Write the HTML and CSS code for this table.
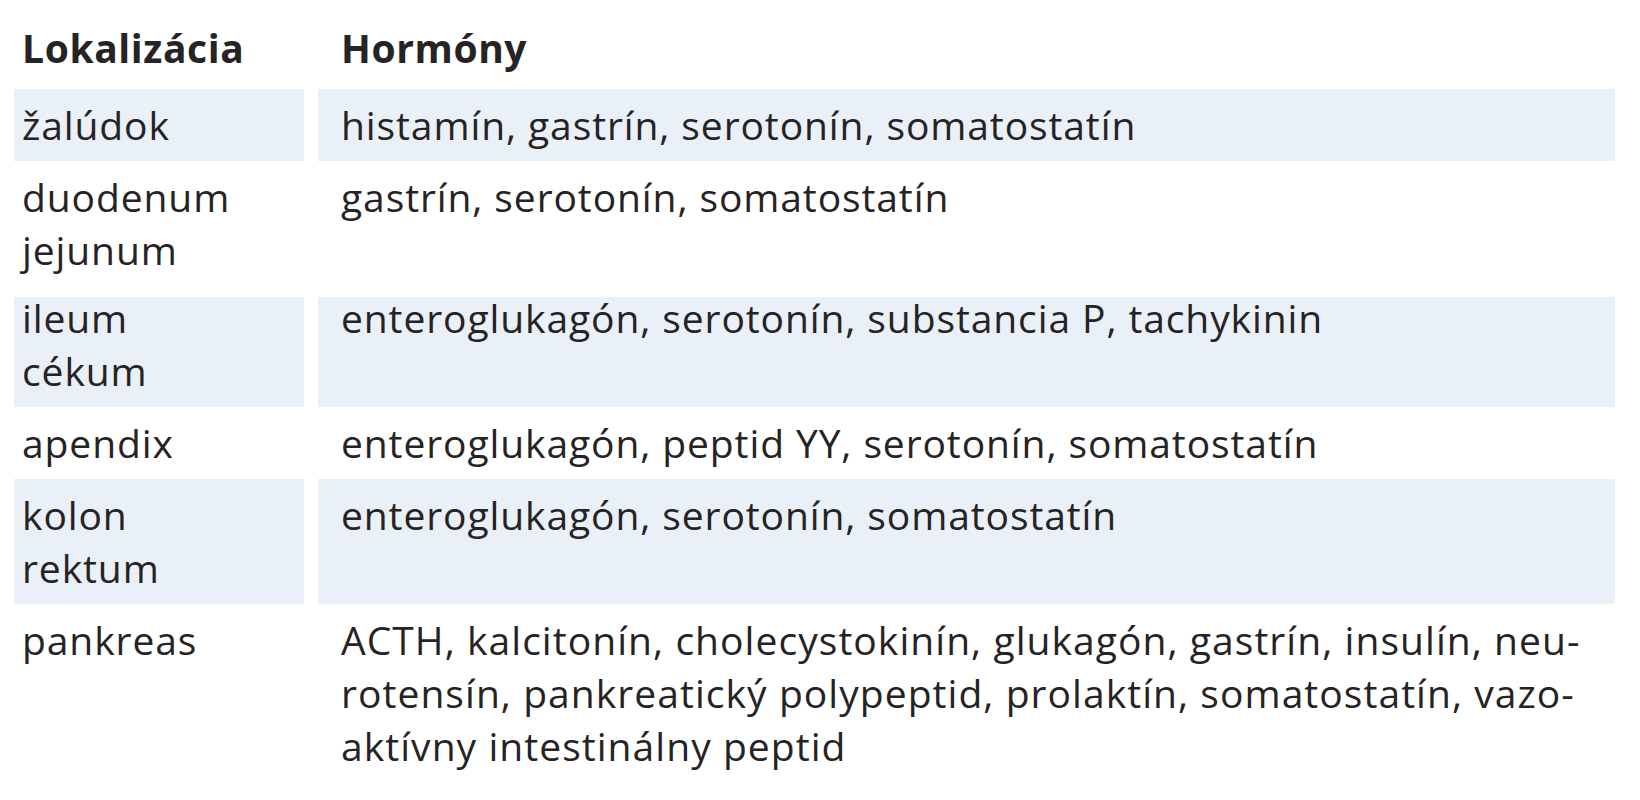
FILE: index.html
```html
<!DOCTYPE html>
<html lang="sk">
<head>
<meta charset="utf-8">
<title>Lokalizácia a hormóny</title>
<link rel="stylesheet" href="styles.css">
</head>
<body>
<table class="hormones">
  <thead>
    <tr>
      <th class="loc">Lokalizácia</th>
      <th class="val">Hormóny</th>
    </tr>
  </thead>
  <tbody>
    <tr class="shaded">
      <td class="loc">žalúdok</td>
      <td class="val">histamín, gastrín, serotonín, somatostatín</td>
    </tr>
    <tr class="before-tight">
      <td class="loc">duodenum<br>jejunum</td>
      <td class="val">gastrín, serotonín, somatostatín</td>
    </tr>
    <tr class="shaded tight">
      <td class="loc"><div class="lift">ileum<br>cékum</div></td>
      <td class="val"><div class="lift">enteroglukagón, serotonín, substancia P, tachykinin</div></td>
    </tr>
    <tr>
      <td class="loc">apendix</td>
      <td class="val">enteroglukagón, peptid YY, serotonín, somatostatín</td>
    </tr>
    <tr class="shaded">
      <td class="loc">kolon<br>rektum</td>
      <td class="val">enteroglukagón, serotonín, somatostatín</td>
    </tr>
    <tr>
      <td class="loc">pankreas</td>
      <td class="val nowrap">ACTH, kalcitonín, cholecystokinín, glukagón, gastrín, insulín, neu-<br>rotensín, pankreatický polypeptid, prolaktín, somatostatín, vazo-<br>aktívny intestinálny peptid</td>
    </tr>
  </tbody>
</table>
</body>
</html>
```

FILE: styles.css
```css
html, body {
  margin: 0;
  padding: 0;
  background: #ffffff;
}

body {
  font-family: "Open Sans", "Noto Sans", "DejaVu Sans", sans-serif;
  color: #262324;
  font-size: 39px;
  letter-spacing: 0.9px;
  line-height: 53px;
}

.hormones {
  border-collapse: separate;
  border-spacing: 14px 0;
  width: 1629px;
}

.hormones th,
.hormones td {
  text-align: left;
  vertical-align: top;
  padding: 9px 8px 10px 8px;
}

.hormones .val {
  padding-left: 23px;
}

.hormones th {
  font-weight: 700;
  letter-spacing: 0.6px;
  padding-top: 21px;
  padding-bottom: 15px;
}

.hormones .loc {
  width: 274px;
}

.hormones .shaded td {
  background: #eaf0f7;
}

.hormones .before-tight td {
  padding-bottom: 21px;
}

.hormones .tight td {
  padding-top: 0;
}

.lift {
  margin-top: -6px;
}

.nowrap {
  white-space: nowrap;
  letter-spacing: 1.05px;
}
```
